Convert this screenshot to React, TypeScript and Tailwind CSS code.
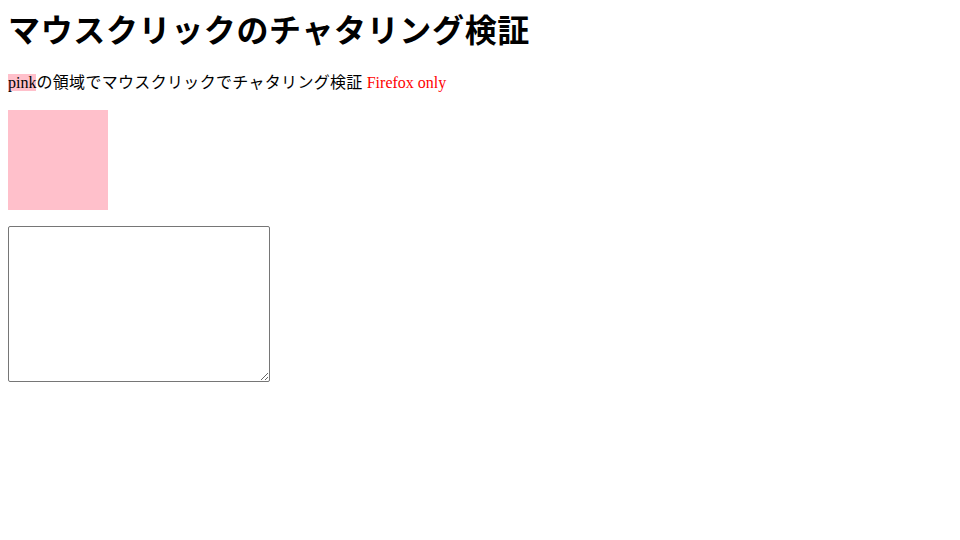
import React from "react";

const font = "font-['Liberation_Serif','Noto_Sans_CJK_JP',serif]";

const App: React.FC = () => {
  return (
    <div className={`${font} text-black bg-white min-h-screen px-2 pt-2`}>
      <h1 className="text-[32px] leading-[46px] font-bold tracking-[0.02em]">
        マウスクリックのチャタリング検証
      </h1>
      <p className="text-base leading-[23px] mt-[16.5px]">
        <span className="bg-[pink]">pink</span>
        <span className="tracking-[0.02em]">の領域でマウスクリックでチャタリング検証</span>{" "}
        <span className="text-[red]">Firefox only</span>
      </p>
      <div className="w-[100px] h-[100px] bg-[pink] mt-[16.5px]" />
      <div className="mt-4 leading-none">
        <textarea className="w-[262px] h-[156px] border border-[#767676] rounded-[2px] p-[2px] font-mono text-[13.33px] align-top" />
      </div>
    </div>
  );
};

export default App;
